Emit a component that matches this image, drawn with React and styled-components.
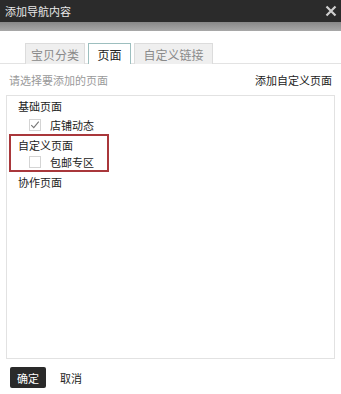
import React from "react";
import styled, { createGlobalStyle } from "styled-components";

const Global = createGlobalStyle`
  html, body { margin: 0; padding: 0; background: #fff; }
  * { box-sizing: border-box; }
`;

const Dialog = styled.div`
  width: 341px;
  height: 394px;
  background: #fff;
  font-family: "Noto Sans CJK SC", "Noto Sans", sans-serif;
  font-size: 11px;
  color: #222;
  display: flex;
  flex-direction: column;
  overflow: hidden;
`;

const Header = styled.div`
  height: 22px;
  background: #2b2b2b;
  color: #e8e8e8;
  display: flex;
  align-items: center;
  justify-content: space-between;
  padding: 0 4px 0 5px;
  font-size: 11px;
`;

const Strip = styled.div`
  height: 9px;
  background: linear-gradient(#878787, #a8a8a8);
`;

const TabBar = styled.div`
  margin-top: 12px;
  height: 21px;
  display: flex;
  gap: 3px;
  padding-left: 25px;
  border-bottom: 1px solid #e3e3e3;
`;

const Tab = styled.div`
  width: ${(p) => p.$w}px;
  height: 21px;
  display: flex;
  align-items: center;
  justify-content: center;
  font-size: 12px;
  border: 1px solid ${(p) => (p.$active ? "#9dbfbf" : "#dcdcdc")};
  border-bottom: none;
  background: ${(p) => (p.$active ? "#fff" : "#efefef")};
  color: ${(p) => (p.$active ? "#222" : "#8a8a8a")};
`;

const InfoRow = styled.div`
  height: 31px;
  display: flex;
  align-items: center;
  justify-content: space-between;
  padding: 0 9px 0 9px;
  padding-top: 1px;
`;

const Hint = styled.span`
  color: #9a9a9a;
`;

const Link = styled.span`
  color: #222;
`;

const ListBox = styled.div`
  margin: 0 6px;
  height: 264px;
  border: 1px solid #e2e2e2;
  display: flex;
  flex-direction: column;
`;

const GroupLabel = styled.div`
  height: ${(p) => p.$h || 19}px;
  display: flex;
  align-items: center;
  padding-left: ${(p) => p.$pl ?? 11}px;
`;

const Item = styled.div`
  height: ${(p) => p.$h || 19}px;
  display: flex;
  align-items: center;
  gap: 9px;
  padding-left: ${(p) => p.$pl ?? 22}px;
`;

const Highlight = styled.div`
  width: 100px;
  margin-left: 2px;
  border: 2px solid #a9373b;
`;

const Box = styled.span`
  width: 12px;
  height: 12px;
  border: 1px solid #d4d4d4;
  background: #fff;
  display: flex;
  align-items: center;
  justify-content: center;
`;

const Footer = styled.div`
  display: flex;
  align-items: center;
  gap: 14px;
  padding: 8px 0 0 10px;
`;

const Primary = styled.div`
  width: 36px;
  height: 21px;
  background: #2a2a2a;
  color: #fff;
  border-radius: 2px;
  display: flex;
  align-items: center;
  justify-content: center;
`;

const Plain = styled.div`
  color: #222;
`;

const Check = ({ checked }) => (
  <Box>
    {checked && (
      <svg width="12" height="12" viewBox="0 0 12 12">
        <path d="M1.5 6.2 L4.5 9.2 L10.5 2" fill="none" stroke="#777" strokeWidth="1.3" />
      </svg>
    )}
  </Box>
);

export default function App() {
  return (
    <>
      <Global />
      <Dialog>
        <Header>
          <span>添加导航内容</span>
          <svg width="12" height="12" viewBox="0 0 12 12">
            <path d="M1.5 1.5 L10.5 10.5 M10.5 1.5 L1.5 10.5" stroke="#cfcfcf" strokeWidth="2.2" />
          </svg>
        </Header>
        <Strip />
        <TabBar>
          <Tab $w={60}>宝贝分类</Tab>
          <Tab $w={43} $active>页面</Tab>
          <Tab $w={79}>自定义链接</Tab>
        </TabBar>
        <InfoRow>
          <Hint>请选择要添加的页面</Hint>
          <Link>添加自定义页面</Link>
        </InfoRow>
        <ListBox>
          <GroupLabel>基础页面</GroupLabel>
          <Item>
            <Check checked />
            <span>店铺动态</span>
          </Item>
          <Highlight>
            <GroupLabel $h={17} $pl={7}>自定义页面</GroupLabel>
            <Item $h={17} $pl={18}>
              <Check />
              <span>包邮专区</span>
            </Item>
          </Highlight>
          <GroupLabel>协作页面</GroupLabel>
        </ListBox>
        <Footer>
          <Primary>确定</Primary>
          <Plain>取消</Plain>
        </Footer>
      </Dialog>
    </>
  );
}
